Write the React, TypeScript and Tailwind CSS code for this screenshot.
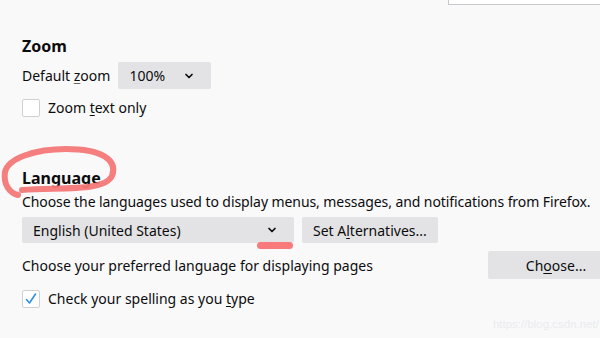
import { ChevronDown } from "lucide-react"

const font = { fontFamily: '"Noto Sans", "Open Sans", sans-serif' }

const Box = ({ checked }: { checked?: boolean }) => (
  <span className="flex h-[18px] w-[18px] shrink-0 items-center justify-center rounded-[2px] border border-[#d0d0d4] bg-white">
    {checked && (
      <svg width="14" height="14" viewBox="0 0 14 14">
        <path d="M2.5 7.5 L5.5 11 L11.5 2" fill="none" stroke="#2f8fe8" strokeWidth="1.6" strokeLinecap="round" strokeLinejoin="round" />
      </svg>
    )}
  </span>
)

const App = () => {
  return (
    <div className="relative h-[338px] w-[600px] overflow-hidden bg-[#f9f9fa] text-[14px] text-[#0c0c0d]" style={font}>
      {/* search box edge */}
      <div className="flex justify-end">
        <div className="h-[5px] w-[152px] border-b border-l border-[#c8c8cc] bg-white" />
      </div>

      <div className="flex flex-col px-[22px]">
        <h2 className="mt-[31px] text-[16px] font-bold leading-[20px]">Zoom</h2>

        <div className="mt-[6px] flex items-center gap-[8px]">
          <span>
            Default <u className="decoration-[#6b6b6b] underline-offset-2">z</u>oom
          </span>
          <div className="flex h-[27px] w-[93px] items-center justify-between rounded-[2px] bg-[#e3e3e5] pl-[11px] pr-[16px]">
            <span>100%</span>
            <ChevronDown size={12} strokeWidth={3.5} />
          </div>
        </div>

        <label className="mt-[8px] flex items-center gap-[8px]">
          <Box />
          <span>
            Zoom <u className="underline-offset-2">t</u>ext only
          </span>
        </label>

        <h2 className="mt-[50px] text-[16px] font-bold leading-[20px]">Language</h2>
        <p className="mt-[3px] whitespace-nowrap tracking-[-0.08px]">
          Choose the languages used to display menus, messages, and notifications from Firefox.
        </p>

        <div className="mt-[5px] flex items-center gap-[8px]">
          <div className="flex h-[26px] w-[272px] items-center justify-between rounded-[2px] bg-[#e3e3e5] pl-[11px] pr-[16px]">
            <span>English (United States)</span>
            <ChevronDown size={12} strokeWidth={3.5} />
          </div>
          <button className="h-[26px] w-[136px] rounded-[2px] bg-[#e3e3e5] pl-[11px] text-left">
            Set A<u className="underline-offset-2">l</u>ternatives...
          </button>
        </div>

        <div className="mt-[8px] flex items-center justify-between">
          <span>Choose your preferred language for displaying pages</span>
          <button className="mr-[-46px] h-[28px] w-[136px] shrink-0 rounded-[2px] bg-[#e3e3e5]">
            Ch<u className="underline-offset-2">o</u>ose...
          </button>
        </div>

        <label className="mt-[9px] flex items-center gap-[8px]">
          <Box checked />
          <span>
            Check your spelling as you <u className="underline-offset-2">t</u>ype
          </span>
        </label>

        <div className="mr-[-21px] mt-[7px] self-end whitespace-nowrap text-[11.5px] text-[#ebebed]" style={{ fontFamily: '"Liberation Sans", Arial, sans-serif' }}>
          https://blog.csdn.net/
        </div>
      </div>

      {/* annotation overlays */}
      <svg className="pointer-events-none absolute left-0 top-0" width="600" height="338">
        <path
          d="M22 190 C60 187 104 192 112 176 C118 160 102 149 66 149 C36 149 8 158 5 172 C3 185 10 193 18 195"
          fill="none"
          stroke="#f47878"
          strokeWidth="6"
          strokeLinecap="round"
          opacity="0.95"
        />
        <rect x="257" y="242" width="36" height="7" rx="3.5" fill="#f87a7a" />
      </svg>
    </div>
  )
}

export default App
